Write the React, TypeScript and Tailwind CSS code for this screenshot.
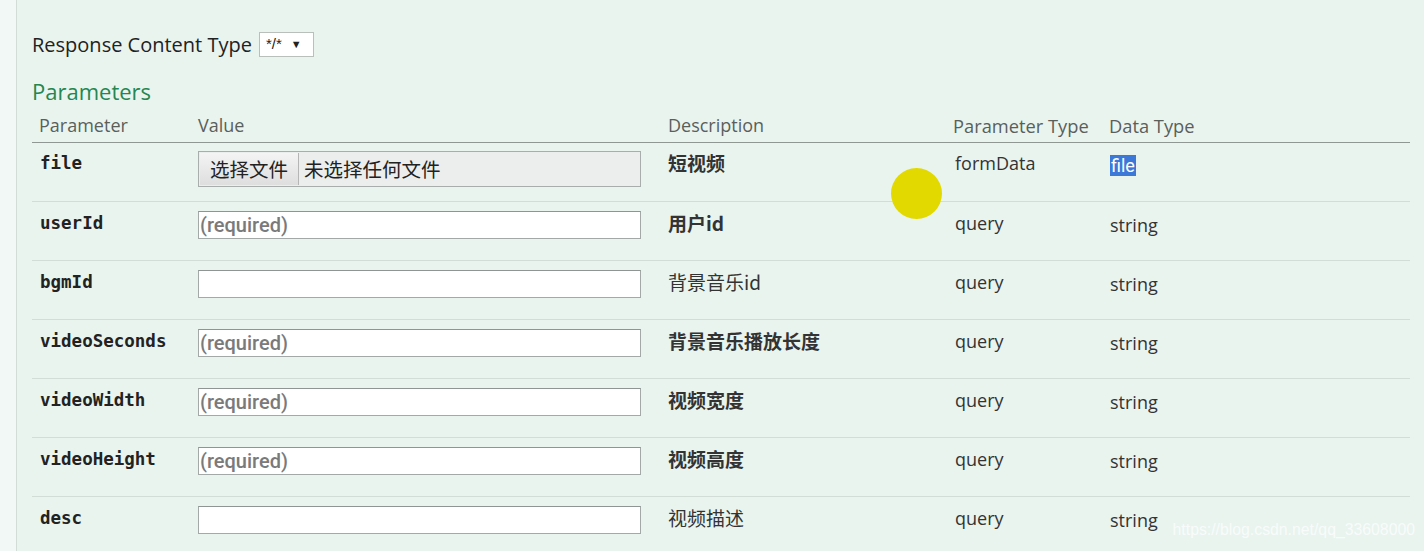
import React from "react"

type Row = {
  name: string
  kind: "file" | "text"
  required?: boolean
  desc: string
  descBold?: boolean
  paramType: string
  dataType: string
}

const rows: Row[] = [
  { name: "file", kind: "file", desc: "短视频", descBold: true, paramType: "formData", dataType: "file" },
  { name: "userId", kind: "text", required: true, desc: "用户id", descBold: true, paramType: "query", dataType: "string" },
  { name: "bgmId", kind: "text", desc: "背景音乐id", paramType: "query", dataType: "string" },
  { name: "videoSeconds", kind: "text", required: true, desc: "背景音乐播放长度", descBold: true, paramType: "query", dataType: "string" },
  { name: "videoWidth", kind: "text", required: true, desc: "视频宽度", descBold: true, paramType: "query", dataType: "string" },
  { name: "videoHeight", kind: "text", required: true, desc: "视频高度", descBold: true, paramType: "query", dataType: "string" },
  { name: "desc", kind: "text", desc: "视频描述", paramType: "query", dataType: "string" },
]

const cols = "grid grid-cols-[166px_470px_285px_156px_1fr]"
const sans = "font-['Open_Sans','Noto_Sans_CJK_SC',sans-serif]"
const cjk = "font-['Noto_Sans_CJK_SC','Noto_Sans',sans-serif]"

function ParamRow({ row }: { row: Row }) {
  const isFile = row.kind === "file"
  return (
    <div className={`${cols} h-[59px] border-b border-[#d3ddd8] items-start ${isFile ? "pt-[8px]" : "pt-[9px]"}`}>
      <div className="pl-[8px] leading-[24px] text-[17.5px] font-bold text-[#222] font-['DejaVu_Sans_Mono',monospace]">
        {row.name}
      </div>
      <div className="pr-[27px]">
        {isFile ? (
          <div className="flex items-center h-[36px] border border-[#a8aeab] bg-[#eceeed]">
            <span className={`${cjk} h-[32px] ml-[1px] w-[99px] flex items-center justify-center text-[19.5px] text-[#222] bg-gradient-to-b from-[#f4f4f4] to-[#dedede] border-r border-[#b5b5b5]`}>
              选择文件
            </span>
            <span className={`${cjk} ml-[5px] text-[19.5px] text-[#222]`}>未选择任何文件</span>
          </div>
        ) : (
          <input
            className="block w-full h-[28px] px-[1px] bg-white border border-[#a3a9a6] border-t-[#8f9592] outline-none font-['Roboto',sans-serif] font-medium text-[20px] placeholder:text-[#7a7a7a]"
            placeholder={row.required ? "(required)" : ""}
          />
        )}
      </div>
      <div className={`${cjk} leading-[24px] text-[19px] text-[#333] ${row.descBold ? "font-bold" : ""}`}>
        {row.desc}
      </div>
      <div className={`${sans} leading-[24px] text-[18px] text-[#333] pl-[2px]`}>{row.paramType}</div>
      <div className={`${sans} leading-[24px] text-[18px] text-[#333] pl-[1px] pt-[2px]`}>
        {row.dataType === "file" ? (
          <span className="bg-[#3b78d8] text-white px-[1px] font-['Roboto',sans-serif]">file</span>
        ) : (
          row.dataType
        )}
      </div>
    </div>
  )
}

export default function App() {
  return (
    <div className="relative w-[1424px] h-[551px] overflow-hidden bg-[#f1f8f5] pl-[16px]">
      <div className="h-full bg-[#e9f4ef] border-l border-[#d2ddd8] pl-[15px] pr-[14px] pt-[32px]">
        {/* Response content type */}
        <div className={`flex items-center gap-[7px] ${sans}`}>
          <span className="text-[20px] leading-[25px] text-[#222]">Response Content Type</span>
          <div className="flex items-center w-[55px] h-[25px] px-[6px] gap-[9px] bg-white border border-[#b9c0bc] text-[15px] text-[#222] font-['Liberation_Sans',sans-serif]">
            <span>*/*</span>
            <span className="text-[11px]">▼</span>
          </div>
        </div>

        <h4 className={`${sans} mt-[20px] text-[22px] leading-[28px] text-[#258650]`}>Parameters</h4>

        {/* Header */}
        <div className={`${cols} mt-[6px] h-[32px] border-b border-[#8f9893] ${sans} text-[18px] text-[#5a5f5c] items-center`}>
          <div className="pl-[7px] pb-[2px]">Parameter</div>
          <div className="pb-[2px]">Value</div>
          <div className="pb-[2px]">Description</div>
          <div className="pb-[2px] text-[18.3px]">Parameter Type</div>
          <div className="pb-[2px] text-[18.3px]">Data Type</div>
        </div>

        {rows.map((r) => (
          <ParamRow key={r.name} row={r} />
        ))}
      </div>

      {/* cursor highlight */}
      <div className="absolute left-[891px] top-[168px] w-[51px] h-[51px] rounded-full bg-[#e2d900]" />

      {/* watermark */}
      <div className="absolute right-[9px] bottom-[9px] text-[15.8px] text-white/70 font-['Liberation_Sans',sans-serif]">
        https://blog.csdn.net/qq_33608000
      </div>
    </div>
  )
}
